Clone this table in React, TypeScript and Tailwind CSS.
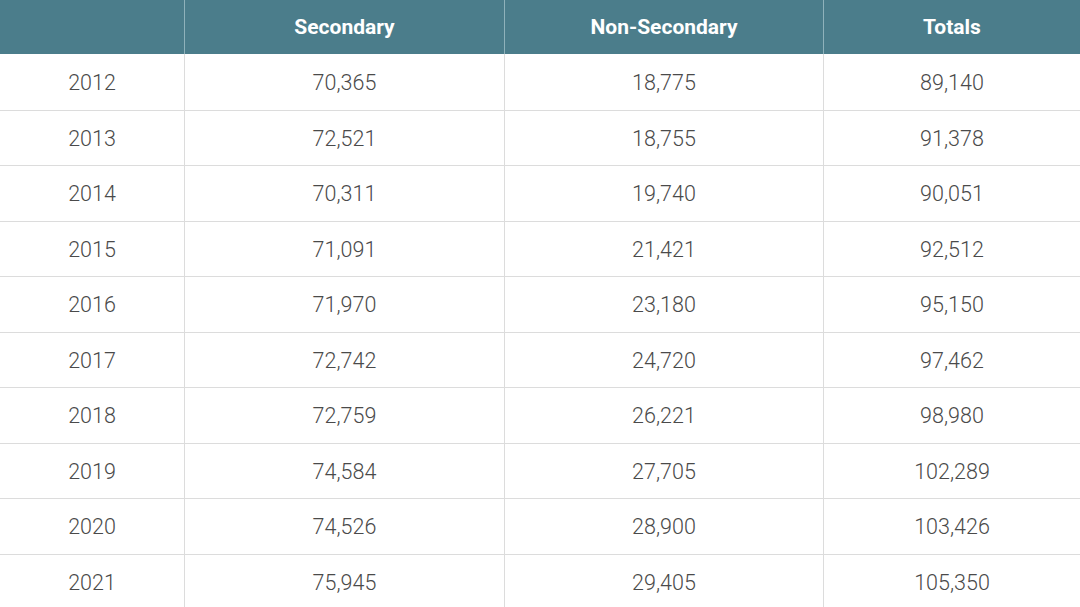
import React from "react";

const rows: [string, string, string, string][] = [
  ["2012", "70,365", "18,775", "89,140"],
  ["2013", "72,521", "18,755", "91,378"],
  ["2014", "70,311", "19,740", "90,051"],
  ["2015", "71,091", "21,421", "92,512"],
  ["2016", "71,970", "23,180", "95,150"],
  ["2017", "72,742", "24,720", "97,462"],
  ["2018", "72,759", "26,221", "98,980"],
  ["2019", "74,584", "27,705", "102,289"],
  ["2020", "74,526", "28,900", "103,426"],
  ["2021", "75,945", "29,405", "105,350"],
];

const cols = "grid grid-cols-[185px_320px_319px_1fr]";

export default function App() {
  return (
    <div className="w-[1080px] h-[607px] overflow-hidden bg-white font-['Roboto',sans-serif]">
      {/* Header */}
      <div className={`${cols} h-[54px] bg-[#4b7d8b] text-white text-[21px] font-bold`}>
        <div className="border-r border-[#8fb2bb]" />
        <div className="flex items-center justify-center pt-[2px] border-r border-[#8fb2bb]">Secondary</div>
        <div className="flex items-center justify-center pt-[2px] border-r border-[#8fb2bb]">Non-Secondary</div>
        <div className="flex items-center justify-center pt-[2px]">Totals</div>
      </div>

      {/* Body */}
      {rows.map((r, i) => (
        <div
          key={r[0]}
          className={`${cols} h-[55.5px] text-[21.5px] font-light text-[#4a4a4a] ${i > 0 ? "border-t border-[#dcdcdc]" : ""}`}
        >
          {r.map((v, j) => (
            <div
              key={j}
              className={`flex items-center justify-center pt-[2px] ${j < 3 ? "border-r border-[#dcdcdc]" : ""}`}
            >
              {v}
            </div>
          ))}
        </div>
      ))}
    </div>
  );
}
